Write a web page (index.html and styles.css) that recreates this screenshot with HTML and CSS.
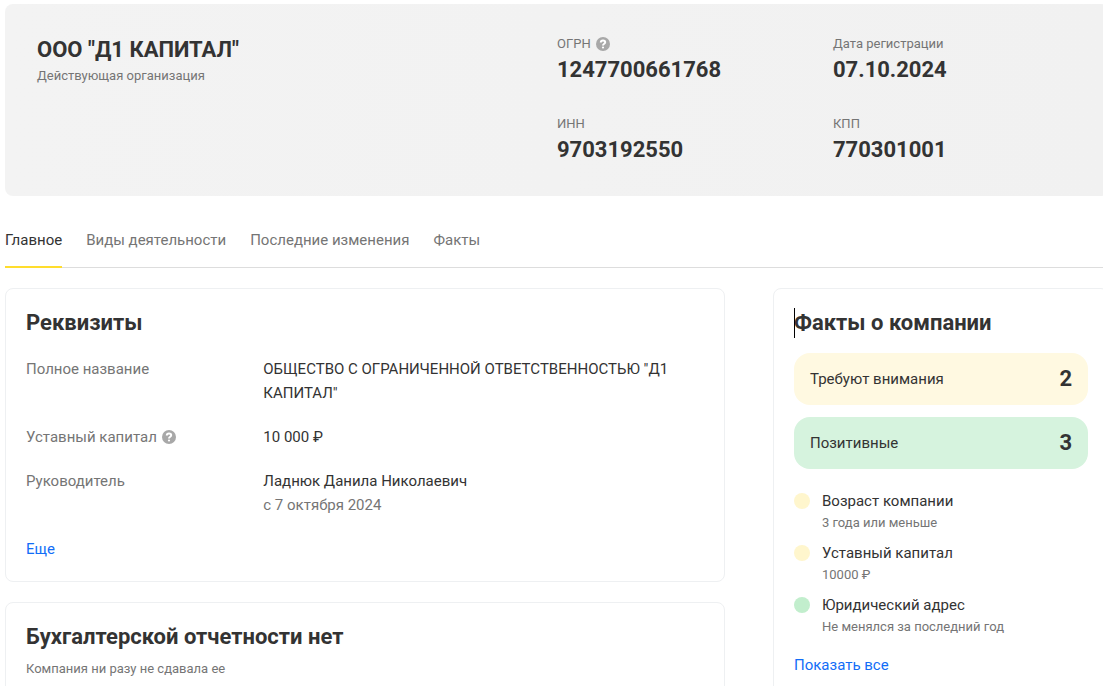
FILE: index.html
```html
<!DOCTYPE html>
<html lang="ru">
<head>
<meta charset="UTF-8">
<meta name="viewport" content="width=device-width, initial-scale=1.0">
<title>ООО "Д1 КАПИТАЛ"</title>
<link rel="stylesheet" href="styles.css">
</head>
<body>

<div class="page">
    <header class="company">
        <div class="company-name">
            <h1>ООО "Д1 КАПИТАЛ"</h1>
            <p class="note">Действующая организация</p>
        </div>
        <dl class="codes">
            <div>
                <dt>ОГРН
                    <button type="button" class="help" aria-label="Что такое ОГРН">
                        <svg viewBox="0 0 14 14" width="14" height="14"><circle cx="7" cy="7" r="7"/><path d="M4.800 5.500C4.800 4.100 5.800 3.500 7 3.500s2.200.7 2.200 1.800C9.200 6.800 7 6.700 7 8.500"/><circle class="dot" cx="7" cy="10.500" r="1.100"/></svg>
                    </button>
                </dt>
                <dd>1247700661768</dd>
            </div>
            <div>
                <dt>Дата регистрации</dt>
                <dd>07.10.2024</dd>
            </div>
            <div>
                <dt>ИНН</dt>
                <dd>9703192550</dd>
            </div>
            <div>
                <dt>КПП</dt>
                <dd>770301001</dd>
            </div>
        </dl>
    </header>

    <nav class="tabs">
        <a href="#main" class="active">Главное</a>
        <a href="#activities">Виды деятельности</a>
        <a href="#changes">Последние изменения</a>
        <a href="#facts">Факты</a>
    </nav>

    <div class="content">
        <main class="column">
            <section class="card" id="main">
                <h2>Реквизиты</h2>
                <dl class="details">
                    <dt>Полное название</dt>
                    <dd>ОБЩЕСТВО С ОГРАНИЧЕННОЙ ОТВЕТСТВЕННОСТЬЮ "Д1 КАПИТАЛ"</dd>
                    <dt>Уставный капитал
                        <button type="button" class="help" aria-label="Что такое уставный капитал">
                            <svg viewBox="0 0 14 14" width="14" height="14"><circle cx="7" cy="7" r="7"/><path d="M4.800 5.500C4.800 4.100 5.800 3.500 7 3.500s2.200.7 2.200 1.800C9.200 6.800 7 6.700 7 8.500"/><circle class="dot" cx="7" cy="10.500" r="1.100"/></svg>
                        </button>
                    </dt>
                    <dd>10 000 ₽</dd>
                    <dt>Руководитель</dt>
                    <dd>Ладнюк Данила Николаевич<br><span class="since">с 7 октября 2024</span></dd>
                </dl>
                <a href="#more" class="more">Еще</a>
            </section>

            <section class="card">
                <h2>Бухгалтерской отчетности нет</h2>
                <p class="note">Компания ни разу не сдавала ее</p>
            </section>
        </main>

        <aside class="card facts" id="facts">
            <h2 class="caret">Факты о компании</h2>
            <button type="button" class="summary warning">Требуют внимания <b>2</b></button>
            <button type="button" class="summary positive">Позитивные <b>3</b></button>
            <ul>
                <li class="warning">Возраст компании <span class="note">3 года или меньше</span></li>
                <li class="warning">Уставный капитал <span class="note">10000 ₽</span></li>
                <li class="positive">Юридический адрес <span class="note">Не менялся за последний год</span></li>
            </ul>
            <a href="#all" class="more">Показать все</a>
        </aside>
    </div>
</div>

</body>
</html>
```
FILE: styles.css
```css
* {
    box-sizing: border-box;
}
body {
    margin: 0;
    font-family: Roboto, Arial, sans-serif;
    font-size: 15px;
    line-height: 24px;
    color: #333;
    background: #fff;
    overflow-x: hidden;
}
h1, h2, p, dl, dd, ul {
    margin: 0;
    padding: 0;
}
a {
    text-decoration: none;
}
.page {
    margin: 4px -6px 0 5px;
}
.note {
    font-size: 13px;
    line-height: 20px;
    color: #757575;
}

/* company header */
.company {
    display: grid;
    grid-template-columns: 1fr 1fr;
    padding: 30px 32px;
    border-radius: 8px;
    background: linear-gradient(90deg, #f3f3f3, #f1f1f1);
}
.company h1 {
    font-size: 22px;
    line-height: 32px;
}
.codes {
    display: grid;
    grid-template-columns: 1fr 1fr;
    gap: 28px 32px;
}
.codes dt {
    display: flex;
    align-items: center;
    gap: 5px;
    font-size: 13px;
    line-height: 20px;
    color: #757575;
}
.codes dd {
    font-size: 22px;
    font-weight: bold;
    line-height: 32px;
}
.help {
    display: block;
    padding: 0;
    border: none;
    background: none;
    cursor: pointer;
}
.help svg {
    display: block;
    fill: #a8a8a8;
}
.help path {
    fill: none;
    stroke: #fff;
    stroke-width: 2;
}
.help .dot {
    fill: #fff;
}

/* tabs */
.tabs {
    display: flex;
    gap: 24px;
    margin-top: 20px;
    border-bottom: 1px solid #ddd;
}
.tabs a {
    margin-bottom: -1px;
    padding: 12px 0 14px;
    border-bottom: 2px solid transparent;
    color: #757575;
}
.tabs .active {
    color: #333;
    border-color: #ffdd2d;
}

/* cards */
.content {
    display: grid;
    grid-template-columns: 1fr 336px;
    align-items: start;
    gap: 48px;
    margin-top: 20px;
}
.column {
    display: grid;
    gap: 20px;
}
.card {
    padding: 20px;
    border: 1px solid #eef0f2;
    border-radius: 8px;
}
.card h2 {
    font-size: 22px;
    line-height: 28px;
}
.card h2 + .note {
    margin-top: 8px;
}
.details {
    display: grid;
    grid-template-columns: 35% 1fr;
    row-gap: 20px;
    margin: 20px 0;
}
.details dt {
    display: flex;
    align-items: center;
    align-self: start;
    gap: 5px;
    color: #757575;
}
.since {
    color: #757575;
}
.more {
    display: block;
    color: #126df7;
}

/* facts */
.caret {
    position: relative;
}
.caret::before {
    content: "";
    position: absolute;
    top: -1px;
    bottom: -1px;
    left: 0;
    width: 1px;
    background: #000;
}
.summary {
    display: flex;
    justify-content: space-between;
    align-items: center;
    width: 100%;
    height: 52px;
    margin-top: 12px;
    padding: 0 16px;
    border: none;
    border-radius: 16px;
    font: inherit;
    color: #333;
    cursor: pointer;
}
h2 + .summary {
    margin-top: 16px;
}
.summary b {
    font-size: 22px;
}
.summary.warning {
    background: #fff9e1;
}
.summary.positive {
    background: #d6f3de;
}
.facts ul {
    display: grid;
    gap: 8px;
    margin: 20px 0 16px;
    list-style: none;
}
.facts li {
    position: relative;
    padding-left: 28px;
}
.facts li::before {
    content: "";
    position: absolute;
    top: 4px;
    left: 0;
    width: 16px;
    height: 16px;
    border-radius: 50%;
}
.facts li.warning::before {
    background: #fff6cd;
}
.facts li.positive::before {
    background: #c2eecd;
}
.facts li .note {
    display: block;
}
```
